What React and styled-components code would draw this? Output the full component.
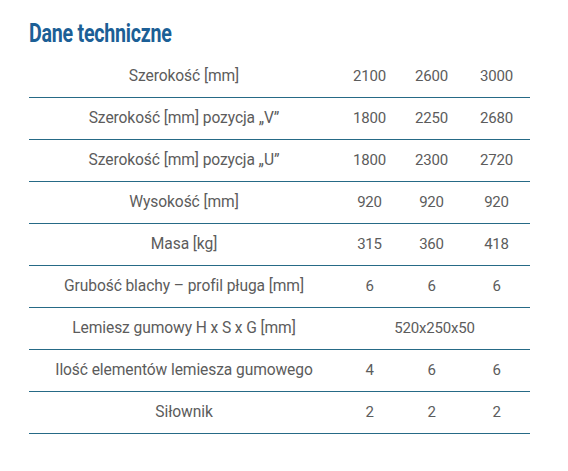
import React from "react"
import styled, { createGlobalStyle } from "styled-components"

const HEADING_BLUE = "#1c5f96"
const LINE_TEAL = "#266a86"
const TEXT_GRAY = "#5c5c5c"

const GlobalStyle = createGlobalStyle`
  body {
    margin: 0;
    background: #fff;
  }
`

const StyledSpecsSection = styled.section`
  padding: 22px 38px 0 29px;
`

// no condensed face installed, so squeeze the bold one
const StyledSpecsHeading = styled.h3`
  display: inline-block;
  margin: 0 0 9px;
  font-family: "Roboto", "Liberation Sans", sans-serif;
  font-weight: 700;
  font-size: 25px;
  line-height: 24px;
  letter-spacing: -0.3px;
  color: ${HEADING_BLUE};
  transform: scaleX(0.785);
  transform-origin: left center;
`

const StyledSpecsTable = styled.table`
  width: 501px;
  border-collapse: collapse;
  font-family: "Roboto", "Liberation Sans", sans-serif;
  font-size: 15px;
  color: ${TEXT_GRAY};
`

const StyledRow = styled.tr`
  height: 42px;

  & + & {
    border-top: 1px solid ${LINE_TEAL};
  }

  &:last-child {
    border-bottom: 1px solid ${LINE_TEAL};
  }
`

const StyledLabel = styled.td`
  width: 310px;
  padding: 0;
  text-align: center;
  font-size: 15.6px;
  letter-spacing: -0.1px;
`

const StyledValue = styled.td`
  width: ${(props) => props.$width || "auto"};
  padding: 0;
  text-align: center;
  letter-spacing: -0.2px;
`

const rows = [
  ["Szerokość [mm]", "2100", "2600", "3000"],
  ["Szerokość [mm] pozycja „V”", "1800", "2250", "2680"],
  ["Szerokość [mm] pozycja „U”", "1800", "2300", "2720"],
  ["Wysokość [mm]", "920", "920", "920"],
  ["Masa [kg]", "315", "360", "418"],
  ["Grubość blachy – profil pługa [mm]", "6", "6", "6"],
  ["Lemiesz gumowy H x S x G [mm]", "520x250x50"],
  ["Ilość elementów lemiesza gumowego", "4", "6", "6"],
  ["Siłownik", "2", "2", "2"],
]

const widths = ["61px", "63px", "67px"]

const App = () => (
  <>
    <GlobalStyle />
    <StyledSpecsSection>
      <StyledSpecsHeading>Dane techniczne</StyledSpecsHeading>
      <StyledSpecsTable>
        <tbody>
          {rows.map(([label, ...values]) => (
            <StyledRow key={label}>
              <StyledLabel>{label}</StyledLabel>
              {values.length === 1 ? (
                <StyledValue colSpan={3}>{values[0]}</StyledValue>
              ) : (
                values.map((value, i) => (
                  <StyledValue key={i} $width={widths[i]}>
                    {value}
                  </StyledValue>
                ))
              )}
            </StyledRow>
          ))}
        </tbody>
      </StyledSpecsTable>
    </StyledSpecsSection>
  </>
)

export default App
